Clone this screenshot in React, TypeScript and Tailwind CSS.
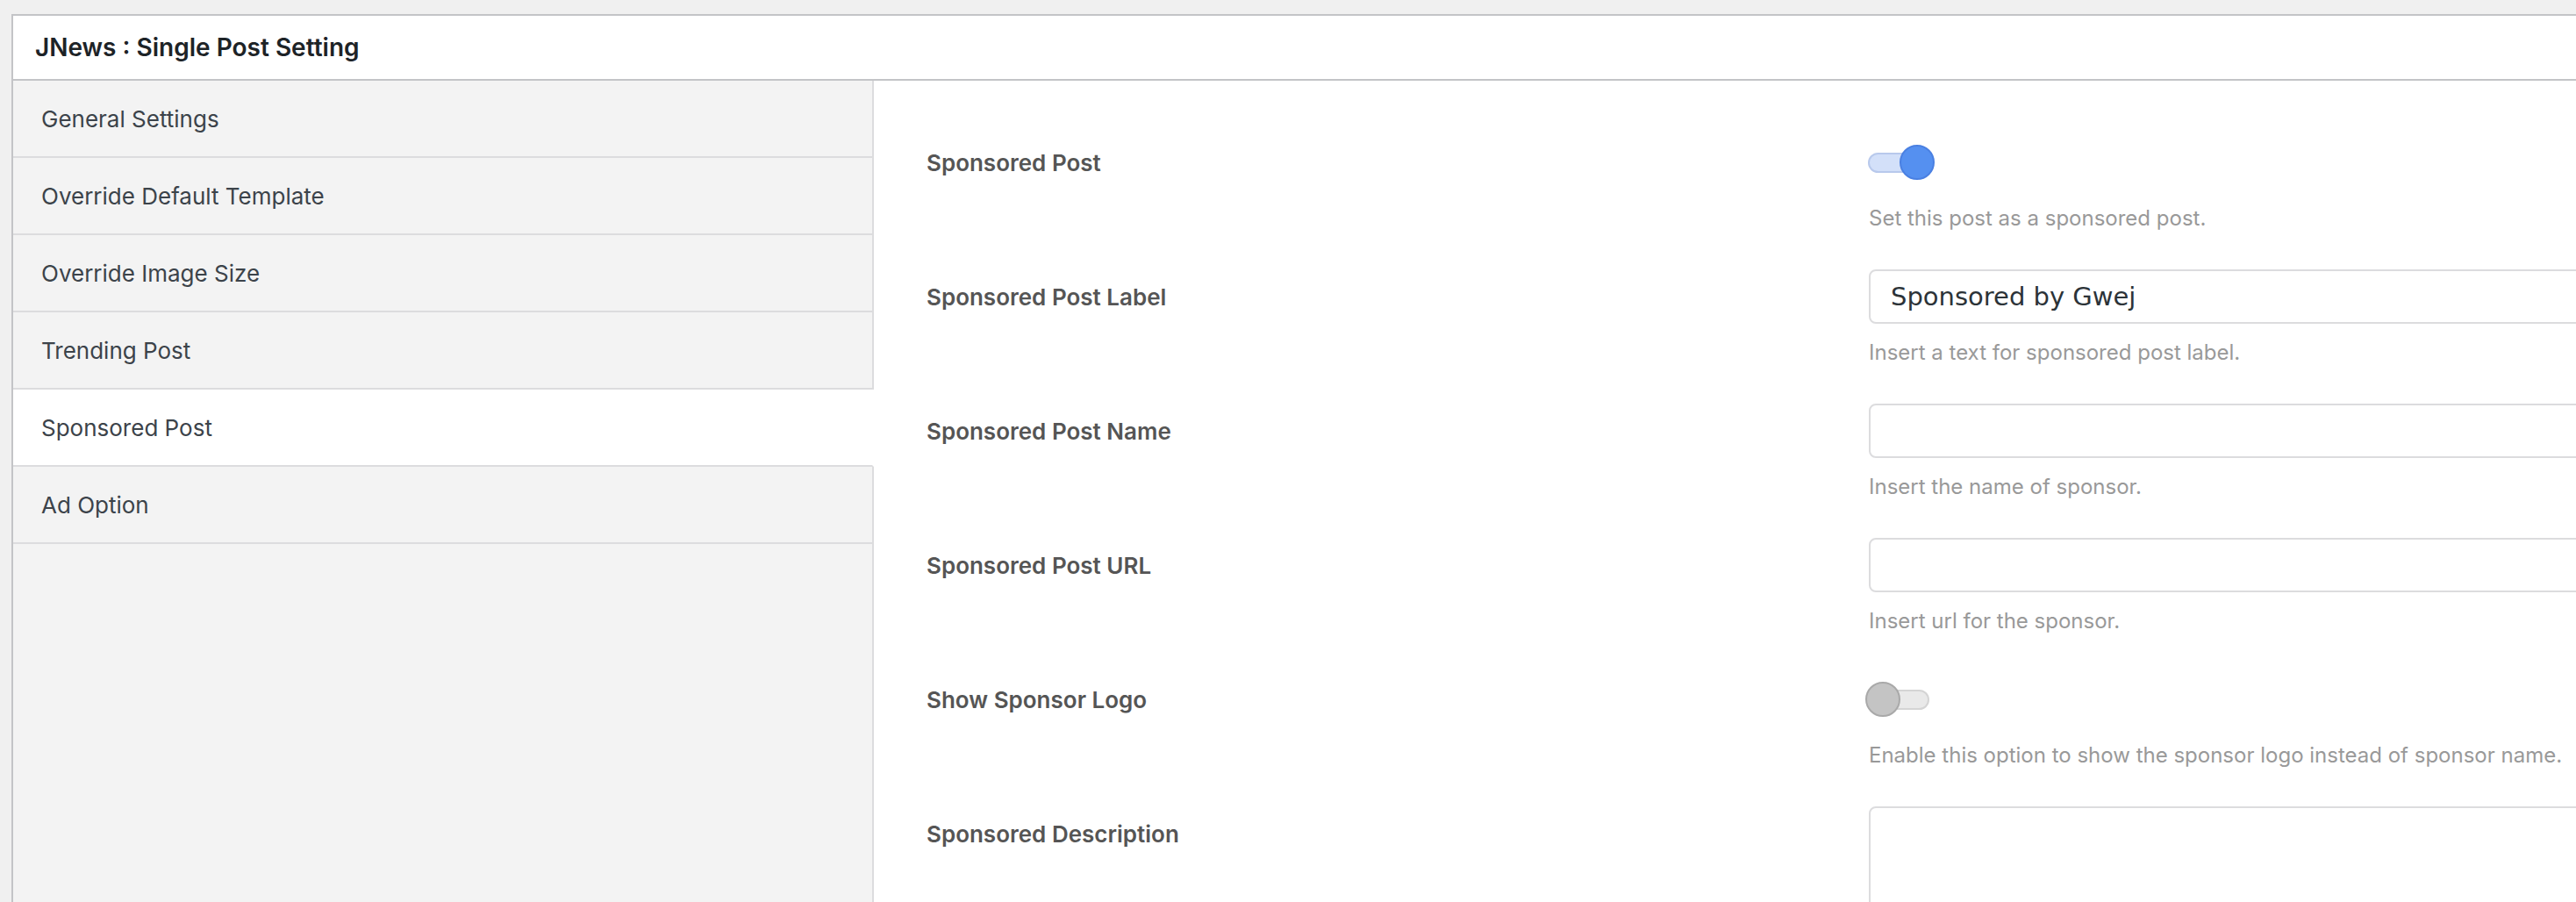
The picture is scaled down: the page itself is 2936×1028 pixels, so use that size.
import { useState } from 'react';

type Field =
  | { kind: 'toggle'; label: string; help: string; on: boolean }
  | { kind: 'text'; label: string; help: string; value: string }
  | { kind: 'textarea'; label: string; help?: string; value: string };

const tabs = [
  'General Settings',
  'Override Default Template',
  'Override Image Size',
  'Trending Post',
  'Sponsored Post',
  'Ad Option',
];

const fields: Field[] = [
  { kind: 'toggle', label: 'Sponsored Post', help: 'Set this post as a sponsored post.', on: true },
  { kind: 'text', label: 'Sponsored Post Label', help: 'Insert a text for sponsored post label.', value: 'Sponsored by Gwej' },
  { kind: 'text', label: 'Sponsored Post Name', help: 'Insert the name of sponsor.', value: '' },
  { kind: 'text', label: 'Sponsored Post URL', help: 'Insert url for the sponsor.', value: '' },
  {
    kind: 'toggle',
    label: 'Show Sponsor Logo',
    help: 'Enable this option to show the sponsor logo instead of sponsor name.',
    on: false,
  },
  { kind: 'textarea', label: 'Sponsored Description', value: '' },
];

function Toggle({ on }: { on: boolean }) {
  return (
    <span className="relative -ml-[4px] block h-[40px] w-[80px]">
      <span
        className={`absolute left-[3px] top-[9px] h-[23px] w-[70px] rounded-full border-2 ${
          on ? 'border-[#b8c9ec] bg-[#d3e0f9]' : 'border-[#d4d4d4] bg-[#e9e9e9]'
        }`}
      />
      <span
        className={`absolute top-0 h-[40px] w-[40px] rounded-full border-2 ${
          on ? 'left-[39px] border-[#4a80e2] bg-[#5590f0]' : 'left-0 border-[#a9a9a9] bg-[#c4c4c4]'
        }`}
      />
    </span>
  );
}

function FieldRow({ field }: { field: Field }) {
  return (
    <div className="grid grid-cols-[1074px_900px] pb-[45px]">
      <div className="flex h-[62px] items-center text-[26px] font-semibold text-[#555555]">{field.label}</div>
      <div>
        {field.kind === 'toggle' && (
          <div className="flex h-[62px] items-center">
            <Toggle on={field.on} />
          </div>
        )}
        {field.kind === 'text' && (
          <input
            readOnly
            value={field.value}
            className="block h-[62px] w-full rounded-[8px] border-2 border-[#dcdcde] bg-white px-[23px] font-['DejaVu_Sans',sans-serif] text-[29px] text-[#2c3338] outline-none"
          />
        )}
        {field.kind === 'textarea' && (
          <textarea
            readOnly
            value={field.value}
            className="block h-[200px] w-full resize-none rounded-[8px] border-2 border-[#dcdcde] bg-white px-[23px] py-[14px] font-['DejaVu_Sans',sans-serif] text-[29px] text-[#2c3338] outline-none"
          />
        )}
        {field.help && <p className="mt-[20px] text-[24px] leading-[26px] text-[#999999]">{field.help}</p>}
      </div>
    </div>
  );
}

export default function App() {
  const [active, setActive] = useState('Sponsored Post');

  return (
    <div className="h-[1028px] w-[2936px] overflow-hidden bg-[#f0f0f0] pl-[13px] pt-[16px] font-['Inter',sans-serif]">
      <div className="w-[3200px] border-l-2 border-t-2 border-[#c3c4c7] bg-white">
        <div className="flex h-[74px] items-center border-b-2 border-[#c3c4c7] pl-[25px] text-[28px] font-semibold text-[#1d2327]">
          JNews : Single Post Setting
        </div>

        <div className="flex">
          {/* the active tab drops its right border so it opens into the panel */}
          <nav className="flex w-[981px] shrink-0 flex-col bg-[#f3f3f3]">
            {tabs.map((tab) => (
              <button
                key={tab}
                type="button"
                onClick={() => setActive(tab)}
                className={`flex h-[88px] w-full items-center border-b-2 border-[#dcdcde] pl-[32px] text-left text-[26px] text-[#3c434a] ${
                  active === tab ? 'border-r-2 border-r-white bg-white' : 'border-r-2 bg-[#f3f3f3]'
                }`}
              >
                {tab}
              </button>
            ))}
            <div className="flex-1 border-r-2 border-[#dcdcde]" />
          </nav>

          <div className="flex-1 pl-[60px] pt-[62px]">
            {fields.map((field) => (
              <FieldRow key={field.label} field={field} />
            ))}
          </div>
        </div>
      </div>
    </div>
  );
}
